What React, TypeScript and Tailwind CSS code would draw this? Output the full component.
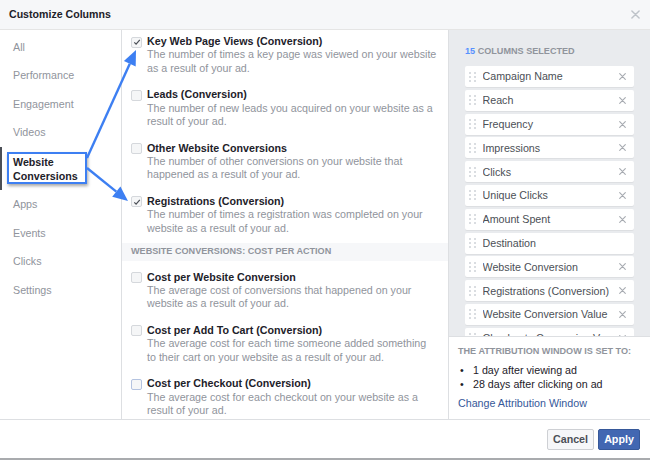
import React from "react";

type Item = { title: string; lines: string[]; checked?: boolean; focus?: boolean };

const group1: Item[] = [
  {
    title: "Key Web Page Views (Conversion)",
    checked: true,
    lines: ["The number of times a key page was viewed on your website", "as a result of your ad."],
  },
  {
    title: "Leads (Conversion)",
    lines: ["The number of new leads you acquired on your website as a", "result of your ad."],
  },
  {
    title: "Other Website Conversions",
    lines: ["The number of other conversions on your website that", "happened as a result of your ad."],
  },
  {
    title: "Registrations (Conversion)",
    checked: true,
    lines: ["The number of times a registration was completed on your", "website as a result of your ad."],
  },
];

const group2: Item[] = [
  {
    title: "Cost per Website Conversion",
    lines: ["The average cost of conversions that happened on your", "website as a result of your ad."],
  },
  {
    title: "Cost per Add To Cart (Conversion)",
    lines: ["The average cost for each time someone added something", "to their cart on your website as a result of your ad."],
  },
  {
    title: "Cost per Checkout (Conversion)",
    focus: true,
    lines: ["The average cost for each checkout on your website as a", "result of your ad."],
  },
];

const columns: { name: string; removable: boolean }[] = [
  { name: "Campaign Name", removable: true },
  { name: "Reach", removable: true },
  { name: "Frequency", removable: true },
  { name: "Impressions", removable: true },
  { name: "Clicks", removable: true },
  { name: "Unique Clicks", removable: true },
  { name: "Amount Spent", removable: true },
  { name: "Destination", removable: false },
  { name: "Website Conversion", removable: true },
  { name: "Registrations (Conversion)", removable: true },
  { name: "Website Conversion Value", removable: true },
  { name: "Checkouts Conversion Value", removable: true },
];

function XIcon({ size, color }: { size: number; color: string }) {
  return (
    <svg width={size} height={size} viewBox="0 0 10 10">
      <path d="M1 1 L9 9 M9 1 L1 9" stroke={color} strokeWidth="1.6" strokeLinecap="round" />
    </svg>
  );
}

function Checkbox({ checked, focus }: { checked?: boolean; focus?: boolean }) {
  return (
    <span
      className={`mt-[1.5px] flex h-[11px] w-[11px] shrink-0 items-center justify-center rounded-[2px] border bg-[#f5f6f7] ${
        focus ? "border-[#b4c3e0]" : "border-[#d5d8dc]"
      }`}
    >
      {checked && (
        <svg width="8" height="8" viewBox="0 0 8 8">
          <path d="M1.3 4.3 L3.1 6.1 L6.8 1.9" fill="none" stroke="#4b4f56" strokeWidth="1.2" />
        </svg>
      )}
    </span>
  );
}

function Option({ item, last }: { item: Item; last?: boolean }) {
  return (
    <div className={`flex gap-[5px] pl-[9px] ${last ? "pb-[8px]" : "pb-[13.1px]"}`}>
      <Checkbox checked={item.checked} focus={item.focus} />
      <div className="leading-[13.4px]">
        <div className="whitespace-nowrap font-bold text-[#1d2129]">{item.title}</div>
        {item.lines.map((l) => (
          <div key={l} className="whitespace-nowrap text-[#90949c]">
            {l}
          </div>
        ))}
      </div>
    </div>
  );
}

function Handle() {
  return (
    <svg width="7" height="10" viewBox="0 0 7 10" className="ml-[4px] shrink-0">
      {[0, 4, 8].map((y) =>
        [0, 5].map((x) => <rect key={`${x}-${y}`} x={x} y={y} width="2" height="2" fill="#dadde1" />)
      )}
    </svg>
  );
}

export default function App() {
  const side = ["All", "Performance", "Engagement", "Videos"];
  const side2 = ["Apps", "Events", "Clicks", "Settings"];
  return (
    <div className="relative h-[460px] w-[650px] overflow-hidden bg-white font-['Liberation_Sans',Arial,sans-serif] text-[10.7px]">
      {/* Header */}
      <div className="flex h-[30px] items-center justify-between border-b border-[#e5e5e5] bg-[#f6f7f9] pl-[9px] pr-[10px]">
        <span className="text-[10.6px] font-bold text-[#1d2129]">Customize Columns</span>
        <XIcon size={9} color="#bec3c9" />
      </div>

      {/* Body */}
      <div className="flex h-[389px]">
        {/* Sidebar */}
        <div className="w-[122px] shrink-0 border-r border-[#dddfe2] pt-[2.75px] text-[#90949c]">
          {side.map((s) => (
            <div key={s} className="flex h-[28.5px] items-center pl-[13px]">
              {s}
            </div>
          ))}
          <div className="flex h-[43.5px] flex-col justify-center border-l-2 border-[#4b4f56] pl-[11px] font-bold leading-[14px] text-[#1d2129]">
            <span>Website</span>
            <span>Conversions</span>
          </div>
          {side2.map((s) => (
            <div key={s} className="flex h-[28.5px] items-center pl-[13px]">
              {s}
            </div>
          ))}
        </div>

        {/* Middle */}
        <div className="w-[327px] shrink-0 overflow-hidden border-r border-[#dddfe2] pt-[5px]">
          {group1.map((it, i) => (
            <Option key={it.title} item={it} last={i === group1.length - 1} />
          ))}
          <div className="flex h-[17.4px] items-center bg-[#f6f7f9] pl-[9px] text-[9.1px] font-bold text-[#90949c]">
            WEBSITE CONVERSIONS: COST PER ACTION
          </div>
          <div className="pt-[10px]">
            {group2.map((it) => (
              <Option key={it.title} item={it} />
            ))}
          </div>
        </div>

        {/* Right */}
        <div className="flex min-w-0 flex-1 flex-col bg-[#e9ebee]">
          <div className="flex-1 overflow-hidden px-[16px] pt-[15.5px]">
            <div className="text-[9.1px] font-bold leading-[11px] text-[#90949c]">
              <span className="text-[#5890ff]">15</span> COLUMNS SELECTED
            </div>
            <div className="mt-[9.5px] flex flex-col gap-[2.8px]">
              {columns.map((c) => (
                <div
                  key={c.name}
                  className="flex h-[21px] shrink-0 items-center rounded-[2px] bg-white shadow-[0_1px_0_#dddfe2]"
                >
                  <Handle />
                  <span className="ml-[6.5px] flex-1 truncate text-[#4b4f56]">{c.name}</span>
                  {c.removable && (
                    <span className="mr-[8.5px] ml-[4px] shrink-0">
                      <XIcon size={7} color="#a7abb1" />
                    </span>
                  )}
                </div>
              ))}
            </div>
          </div>
          <div className="h-[83px] shrink-0 border-t border-[#dddfe2] bg-white pl-[9px] pt-[9px]">
            <div className="text-[9.1px] font-bold leading-[11px] text-[#90949c]">
              THE ATTRIBUTION WINDOW IS SET TO:
            </div>
            <div className="mt-[6px] leading-[14px] text-[#1d2129]">
              <div className="flex">
                <span className="w-[15px] pl-[2px]">•</span>1 day after viewing ad
              </div>
              <div className="flex">
                <span className="w-[15px] pl-[2px]">•</span>28 days after clicking on ad
              </div>
            </div>
            <div className="mt-[5.4px] leading-[14px] text-[#365899]">Change Attribution Window</div>
          </div>
        </div>
      </div>

      {/* Footer */}
      <div className="flex h-[39px] items-center justify-end gap-[4px] border-t border-[#dddfe2] pr-[10px]">
        <button className="flex h-[21px] w-[47px] items-center justify-center rounded-[2px] border border-[#ced0d4] bg-[#f6f7f9] font-bold text-[#4b4f56]">
          Cancel
        </button>
        <button className="flex h-[21px] w-[42px] items-center justify-center rounded-[2px] border border-[#365899] bg-[#4267b2] font-bold text-white">
          Apply
        </button>
      </div>
      <div className="h-[2px] bg-[#a9abae]" />

      {/* Annotation overlay */}
      <div className="pointer-events-none absolute left-[7px] top-[152px] h-[32px] w-[80px] border-2 border-[#3d7ff2] shadow-[1px_2px_3px_rgba(0,0,0,0.35)]" />
      <svg className="pointer-events-none absolute left-0 top-0" width="650" height="460" viewBox="0 0 650 460">
        <line x1="87" y1="158" x2="129.8" y2="63.7" stroke="#3d7ff2" strokeWidth="2.4" />
        <polygon points="136,50 135.7,66.4 123.9,61" fill="#3d7ff2" />
        <line x1="87" y1="168" x2="116.3" y2="191.6" stroke="#3d7ff2" strokeWidth="2.4" />
        <polygon points="128,201 112.2,196.7 120.4,186.5" fill="#3d7ff2" />
      </svg>
    </div>
  );
}
